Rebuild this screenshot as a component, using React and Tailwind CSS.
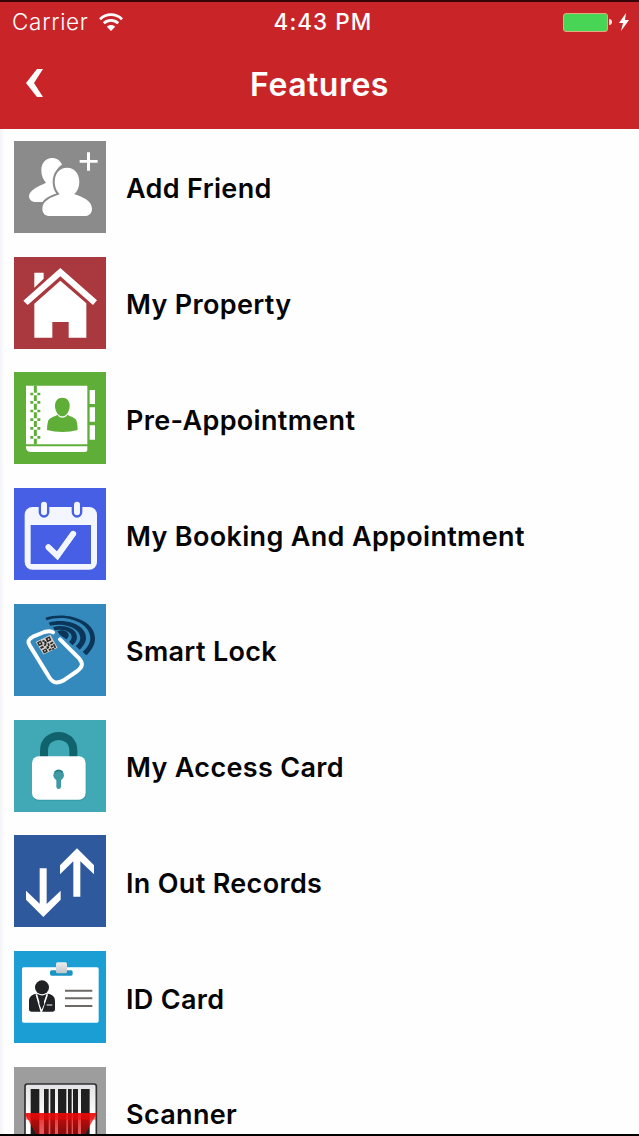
import React from "react";

const AddFriendIcon = () => (
  <svg viewBox="42 32 276 276" className="size-full bg-[#8b8b8b]">
    <g fill="#fff">
      <path d="M124 120c0-22 13-37 32-37 14 0 25 8 30 20-14 8-22 24-22 43 0 17 7 32 11 42-20 7-36 14-43 27H108c-14 0-21-8-21-18 1-18 28-29 51-40-8-8-14-20-14-37z" />
      <path
        stroke="#8b8b8b"
        strokeWidth="12"
        paintOrder="stroke"
        d="M164 155c0-26 15-43 37-43s37 17 37 43c0 15-6 28-15 37 26 8 53 20 53 43 0 15-10 22-23 22H149c-13 0-22-8-22-22 0-23 25-34 52-43-9-9-15-22-15-37z"
      />
      <path d="M261 66h9v23h23v8h-23v24h-9V97h-22v-8h22z" />
    </g>
  </svg>
);

const PropertyIcon = () => (
  <svg viewBox="42 32 276 276" className="size-full bg-[#a9393e]">
    <g fill="#fff">
      <path d="M103 79h28v18l-28 27z" />
      <path d="M181 65l110 97-12 14-98-86-98 86-13-13z" />
      <path d="M181 103l78 68v103h-53v-47h-49v47h-54V172z" />
    </g>
  </svg>
);

const PreAppointmentIcon = () => (
  <svg viewBox="42 30 276 276" className="size-full bg-[#5fae38]">
    <g fill="#fff">
      <path d="M78 71h184v176H78zM78 253h184v11q-1 6-7 6H91q-13-3-13-13z" />
      <path d="M269 84h16v42h-16zM269 136h16v43h-16zM269 190h16v43h-16z" />
    </g>
    <path d="M106 71v176" stroke="#5fae38" strokeWidth="9" />
    <g stroke="#5fae38" strokeWidth="8">
      <path d="M91 96h9m12 0h9M91 121h9m12 0h9M91 147h9m12 0h9M91 173h9m12 0h9M91 199h9m12 0h9M91 226h9m12 0h9" />
    </g>
    <g stroke="#fff" strokeWidth="8">
      <path d="M101 96h10M101 121h10M101 147h10M101 173h10M101 199h10M101 226h10" />
    </g>
    <g fill="#5fae38">
      <path d="M187 107c14 0 22 10 22 24 0 17-10 32-22 32s-22-15-22-32c0-14 8-24 22-24z" />
      <path d="M173 158c4 12 24 12 29 0 12 7 25 8 28 20 2 8 3 17 3 26-28 8-63 8-92 0 0-9 1-18 3-26 4-12 17-13 29-20z" />
    </g>
  </svg>
);

const BookingIcon = () => (
  <svg viewBox="42 30 276 276" className="size-full bg-[#465fe4]">
    <rect x="74" y="87" width="217" height="188" rx="23" fill="#f3f6ff" />
    <rect x="92" y="141" width="181" height="117" fill="#465fe4" />
    <g fill="#f3f6ff" stroke="#465fe4" strokeWidth="14" paintOrder="stroke">
      <rect x="123" y="71" width="18" height="41" rx="9" />
      <rect x="222" y="71" width="18" height="41" rx="9" />
    </g>
    <path
      d="M143 206l29 28 49-69"
      fill="none"
      stroke="#f3f6ff"
      strokeWidth="17"
    />
    <path
      d="M145 207l27 26 48-66"
      fill="none"
      stroke="#f3f6ff"
      strokeWidth="17"
      strokeLinecap="round"
    />
  </svg>
);

const SmartLockIcon = () => (
  <svg viewBox="42 30 276 276" className="size-full bg-[#348abd]">
    <g fill="#0b3659">
      <path d="M136 71c60-20 150 5 149 63 0 20-12 36-26 50l-11-10c12-11 23-25 23-41 1-49-78-75-131-54z" />
      <path d="M146 86c48-14 112 4 112 46 0 14-9 25-19 35l-12-11c8-7 14-15 14-24 0-31-50-47-90-37z" />
      <path d="M159 99c33-10 72 3 72 30 0 11-6 18-13 25l-11-11c5-4 8-9 8-15 0-16-28-25-51-19z" />
      <path d="M172 112c16-8 34 0 34 12 0 5-3 9-7 12l-20-14z" />
    </g>
    <path
      d="M159 115c-7-6-15-4-26-1l-34 14c-15 8-17 15-10 26l54 88c14 26 25 28 48 17l41-28c16-12 18-22 6-37l-58-58"
      fill="none"
      stroke="#fff"
      strokeWidth="12"
      strokeLinecap="round"
      strokeLinejoin="round"
    />
    <g transform="translate(107 144) rotate(-26)">
      <path fill="#d4d0cb" d="M0 0h49l-2 49H0z" transform="skewX(6) scale(1 .9)" />
      <g fill="#292827">
        <path d="M3 3h13v13H3zM31 3h14v13H31zM7 31h13v11H7zM19 5h7v5h-7zM22 11h7v7h-7zM18 18h7v5h-7zM5 20h10v6H5zM29 20h5v8h-5zM37 21h10v5H37zM22 27h7v7h-7zM35 30h6v6h-6zM43 29h5v13h-5zM25 37h8v5h-8zM35 39h6v5h-6z" />
      </g>
      <path fill="#c3c0bb" d="M7 7h5v5H7zM36 7h5v5h-5zM11 34h5v4h-5z" />
    </g>
  </svg>
);

const AccessCardIcon = () => (
  <svg viewBox="42 30 276 276" className="size-full bg-[#40a9b5]">
    <path
      d="M132 142v-20c0-59 88-59 88 0v20"
      fill="none"
      stroke="#10636d"
      strokeWidth="24"
    />
    <rect x="96" y="142" width="163" height="130" rx="20" fill="#2f8f9b" opacity=".7" />
    <rect x="96" y="139" width="161" height="130" rx="20" fill="#fff" />
    <circle cx="176" cy="196" r="16" fill="#409aa4" />
    <path d="M176 200v30" stroke="#409aa4" strokeWidth="14" strokeLinecap="round" />
    <path d="M164 187q12-12 24 0" fill="none" stroke="#267e88" strokeWidth="5" />
  </svg>
);

const InOutIcon = () => (
  <svg viewBox="42 28 276 276" className="size-full bg-[#2e5a9d]">
    <g fill="#fff">
      <path d="M119 128h21v107l42-40v27l-52 52-52-52v-27l41 39z" />
      <path d="M231 68l51 51v27l-41-39v106h-21V107l-40 39v-27z" />
    </g>
  </svg>
);

const IdCardIcon = () => (
  <svg viewBox="42 28 276 276" className="size-full bg-[#1a9ed4]">
    <defs>
      <linearGradient id="clip" x1="0" y1="0" x2="0" y2="1">
        <stop stopColor="#eceeef" />
        <stop offset="1" stopColor="#bfc5c9" />
      </linearGradient>
    </defs>
    <rect x="66" y="77" width="230" height="166" rx="5" fill="#fff" />
    <rect x="150" y="86" width="68" height="16" rx="5" fill="#1a94c3" />
    <rect x="168" y="62" width="33" height="33" rx="5" fill="url(#clip)" />
    <circle cx="126" cy="137" r="21" fill="#202124" />
    <path
      d="M110 156l16 6 17-6c14 2 22 8 22 22v24q0 8-8 8H95q-8 0-8-8v-24c0-14 9-20 23-22z"
      fill="#202124"
    />
    <path d="M109 158l15 52 18-52" fill="none" stroke="#fff" strokeWidth="5" />
    <path d="M119 162h12l-3 7 5 17-8 18-7-18 5-17z" fill="#202124" />
    <path d="M140 190h17" stroke="#fff" strokeWidth="3" />
    <path d="M195 147h82M195 170h82M195 193h82" stroke="#6e6866" strokeWidth="6" />
  </svg>
);

const ScannerIcon = () => (
  <svg viewBox="42 32 276 276" className="size-full bg-[#9d9d9d]">
    <defs>
      <linearGradient id="beam" x1="0" y1="0" x2="0" y2="1">
        <stop stopColor="#f00808" />
        <stop offset=".7" stopColor="#d00000" stopOpacity=".75" />
      </linearGradient>
      <linearGradient id="frame" x1="0" y1="0" x2="0" y2="1">
        <stop stopColor="#e3e2e4" />
        <stop offset=".5" stopColor="#fff" />
      </linearGradient>
    </defs>
    <rect x="75" y="83" width="214" height="200" rx="7" fill="url(#frame)" stroke="#303033" strokeWidth="5" />
    <path
      d="M92 98h26v170H92zM132 98h14v170h-14zM151 98h14v170h-14zM174 98h25v170h-25zM204 98h11v170h-11zM219 98h15v170h-15zM243 98h26v170h-26z"
      fill="#202020"
    />
    <path d="M73 170h218l-42 75H115z" fill="url(#beam)" opacity=".85" />
    <path d="M75 171h213v19H75z" fill="#ed0808" opacity=".5" />
  </svg>
);

const features = [
  { title: "Add Friend", icon: AddFriendIcon },
  { title: "My Property", icon: PropertyIcon },
  { title: "Pre-Appointment", icon: PreAppointmentIcon },
  { title: "My Booking And Appointment", icon: BookingIcon },
  { title: "Smart Lock", icon: SmartLockIcon },
  { title: "My Access Card", icon: AccessCardIcon },
  { title: "In Out Records", icon: InOutIcon },
  { title: "ID Card", icon: IdCardIcon },
  { title: "Scanner", icon: ScannerIcon },
];

const StatusBar = () => (
  <div className="grid h-10 grid-cols-3 items-center pl-3 pr-[9px] text-[22.5px] leading-none">
    <div className="flex items-center gap-[10px]">
      <span className="font-light tracking-[0.7px]">Carrier</span>
      <svg viewBox="0 0 24 18" className="h-[18px] w-6">
        <g fill="none" stroke="#fff" strokeWidth="2.8">
          <path d="M1 6.2c6.3-6 15.700-6 22 0" />
          <path d="M4.800 10.200c4.200-3.900 10.200-3.900 14.400 0" />
        </g>
        <path d="M12 18l-4.200-4.200c2.500-2.300 5.900-2.300 8.400 0z" fill="#fff" />
      </svg>
    </div>
    <span className="pl-1 text-center font-medium tracking-[1.05px]">4:43 PM</span>
    <div className="flex items-center justify-end">
      <div className="h-[19px] w-[45px] rounded-[3px] border border-[#e3a981] bg-[#48d556]" />
      <div className="ml-px h-[6px] w-[3px] rounded-r-full bg-[#ffe6e0]" />
      <svg viewBox="0 0 12 18" className="ml-1.5 h-[18px] w-3" fill="#fff">
        <path d="M8 0L1 10h4L3 18l8-11H7z" />
      </svg>
    </div>
  </div>
);

const Header = () => (
  <header className="h-[129px] shrink-0 border-t-2 border-[#350507] bg-[#c92528] text-white">
    <StatusBar />
    <div className="grid h-[86px] grid-cols-[80px_1fr_80px] items-center">
      <button className="pb-1 pl-[26px]" aria-label="Back">
        <svg viewBox="0 0 17 28" className="h-7 w-[17px]">
          <path d="M11 0h6L8 14l9 14h-6L0 14z" fill="#fff" />
        </svg>
      </button>
      <h1 className="text-center text-[32px] font-semibold leading-none tracking-[0.5px]">
        Features
      </h1>
    </div>
  </header>
);

const FeatureRow = ({ title, icon: Icon }) => (
  <li className="flex h-[115.75px] shrink-0 items-center gap-5 pl-[14px]">
    <div className="size-[92px] shrink-0">
      <Icon />
    </div>
    <span className="whitespace-nowrap pt-[5px] text-[27px] font-semibold leading-8 tracking-[0.33px]">
      {title}
    </span>
  </li>
);

const App = () => (
  <div className="flex h-[1136px] w-[639px] flex-col overflow-hidden border-b-2 border-black bg-[#fefefe] font-['Inter',sans-serif] text-[#050505]">
    <Header />
    <ul className="flex min-h-0 flex-1 flex-col overflow-hidden bg-linear-to-r from-[#f4f4f8] to-[#fefefe] to-[5px]">
      {features.map((feature) => (
        <FeatureRow key={feature.title} {...feature} />
      ))}
    </ul>
  </div>
);

export default App;
